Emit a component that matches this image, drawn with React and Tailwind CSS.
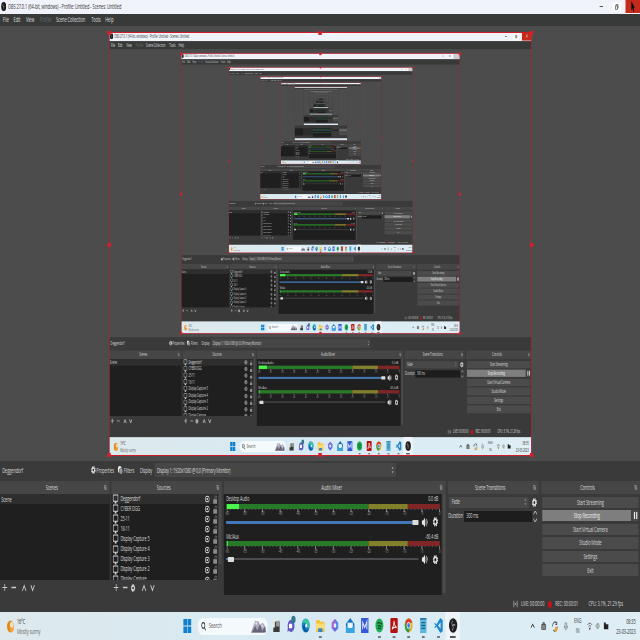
import React from "react";

const SOURCES = [
  "Deggendorf",
  "CYBER DGG",
  "25-11",
  "18-11",
  "Display Capture 5",
  "Display Capture 4",
  "Display Capture 3",
  "Display Capture 2",
  "Display Capture",
];

const DB = ["-60", "-55", "-50", "-45", "-40", "-35", "-30", "-25", "-20", "-15", "-10", "-5", "0"];

function Gear({ className = "w-[9px] h-[9px]" }) {
  return (
    <svg viewBox="0 0 16 16" className={className}>
      <circle cx="8" cy="8" r="6.6" fill="none" stroke="#e4e4e4" strokeWidth="2.6" strokeDasharray="3 2.18" />
      <circle cx="8" cy="8" r="4.4" fill="none" stroke="#e4e4e4" strokeWidth="3" />
    </svg>
  );
}

function Monitor() {
  return (
    <svg viewBox="0 0 16 16" className="h-[10px] w-[11px] shrink-0">
      <rect x="1.2" y="1.5" width="13.6" height="10" rx="1" fill="none" stroke="#dcdcdc" strokeWidth="1.7" />
      <path d="M5 15h6l-1.4-3h-3.2z" fill="#dcdcdc" />
    </svg>
  );
}

function Eye() {
  return (
    <svg viewBox="0 0 16 16" className="h-[8px] w-[9px] shrink-0">
      <ellipse cx="8" cy="8" rx="7" ry="5.6" fill="none" stroke="#cfcfcf" strokeWidth="2.2" />
      <circle cx="8" cy="8" r="2.6" fill="#d8d8d8" />
    </svg>
  );
}

function Lock() {
  return (
    <svg viewBox="0 0 16 16" className="h-[9px] w-[9px] shrink-0">
      <rect x="2" y="7.5" width="12" height="8" fill="#8c8c8c" />
      <path d="M7.5 7V4a2.8 2.8 0 0 1 5.6 0v2" fill="none" stroke="#777" strokeWidth="1.7" />
    </svg>
  );
}

function Speaker() {
  return (
    <svg viewBox="0 0 16 16" className="h-[11px] w-[13px] shrink-0">
      <path d="M0 5h3l5-4v14l-5-4H0z" fill="#e8e8e8" />
      <path d="M10 5q2 3 0 6M12.2 2.8q3.6 5.2 0 10.4" fill="none" stroke="#e8e8e8" strokeWidth="1.6" />
    </svg>
  );
}

function ListTools({ gear }) {
  return (
    <div className="flex h-[15px] items-center pl-[4px]">
      <svg viewBox="0 0 10 10" className="h-[9px] w-[9px]"><path d="M5 1v8M0 5h10" stroke="#ccc" strokeWidth="1.3" /></svg>
      <svg viewBox="0 0 10 10" className="ml-[7px] h-[9px] w-[9px]"><path d="M0 5h10" stroke="#ccc" strokeWidth="1.4" /></svg>
      {gear && <Gear className="ml-[5px] h-[8px] w-[9px]" />}
      <svg viewBox="0 0 10 10" className={gear ? "ml-[10px] h-[8px] w-[10px]" : "ml-[9px] h-[8px] w-[10px]"}>
        <path d="M1 8.5L5 2l4 6.5" fill="none" stroke="#ccc" strokeWidth="1.7" />
      </svg>
      <svg viewBox="0 0 10 10" className="ml-[5px] h-[8px] w-[10px]">
        <path d="M1 1.5L5 8l4-6.5" fill="none" stroke="#ccc" strokeWidth="1.7" />
      </svg>
    </div>
  );
}

function DockTitle({ children }) {
  return (
    <div className="flex h-[12.5px] shrink-0 items-center bg-[#464646] pr-[5px]">
      <span className="flex-1 text-center text-[7px] tracking-[-0.2px]">{children}</span>
      <svg viewBox="0 0 8 8" className="h-[5px] w-[6px]">
        <path d="M0 1h7M2 3h5v4H3z" fill="none" stroke="#bbb" strokeWidth="1.2" />
      </svg>
    </div>
  );
}

function Channel({ name, db, level, active }) {
  return (
    <div className="flex h-[37.4px] flex-col pl-[4px] pr-[6px]">
      <div className="flex h-[9.5px] items-center justify-between pt-[1.5px] text-[6.4px] tracking-[-0.2px]">
        <span>{name}</span>
        <span>{db}</span>
      </div>
      <div className="ml-[1px] flex h-[5px] w-[379px]">
        <div className="w-[252px] bg-[#287a28]">
          <div className="h-full bg-[#4cf54c]" style={{ width: level }} />
        </div>
        <div className="w-[70px] bg-[#83802b]" />
        <div className="w-[57px] bg-[#802626]" />
      </div>
      <svg viewBox="0 0 379 3" className="ml-[1px] h-[3px] w-[379px] shrink-0">
        {Array.from({ length: 61 }, (_, i) => (
          <path key={i} d={`M${0.5 + i * 6.3} 0V${i % 5 ? 1 : 3}`} stroke={i % 5 ? "#777" : "#ccc"} strokeWidth="0.8" />
        ))}
      </svg>
      <div className="-ml-[14px] flex h-[4px] w-[410px] shrink-0 items-center">
        {DB.map((d) => (
          <span key={d} className="w-[31.5px] shrink-0 text-center text-[4.6px] text-[#aaa]">{d}</span>
        ))}
      </div>
      <div className="flex h-[13px] shrink-0 items-center">
        <div className={active ? "h-[3px] w-[336px] bg-[#4478b8]" : "h-[2px] w-[3px] bg-[#4478b8]"} />
        <div className="h-[5px] w-[11px] rounded-[1px] bg-[#dcdcdc]" />
        {!active && <div className="h-[2.2px] w-[333px] bg-[#4c4c50]" />}
        <div className="ml-[5px] flex items-center gap-[7px]">
          <Speaker />
          <Gear className="h-[9.5px] w-[10px]" />
        </div>
      </div>
    </div>
  );
}

const APPS = [
  // task view
  <><rect x="1" y="1" width="9" height="11" fill="#e9e9e9" /><path d="M5 4h9v11H2V10h3z" fill="#3a3a3a" /><path d="M7 3h7v6H7z" fill="#999" /></>,
  // chat
  <><path d="M8 2a6.5 6.5 0 1 1-4 11.600L1 15l.8-4A6.500 6.500 0 0 1 8 2z" fill="#5f5bc4" /><rect x="4" y="6" width="6" height="5" rx="1" fill="#fff" /><circle cx="12.500" cy="1.500" r="4" fill="#34768c" /></>,
  // edge
  <><circle cx="8" cy="8" r="7.500" fill="#1683c9" /><path d="M1 6a7.500 7.500 0 0 1 14.500 2c0 3-5 3-5 1C10 5 4 4 1 6z" fill="#3cc6a0" /><path d="M6 8c0 4 4 6 8 4-3 5-10 4-11-2 0-2 2-4 5-3-1 0-2 0-2 1z" fill="#0d57a5" /><circle cx="9" cy="8" r="2" fill="#dff3fb" /></>,
  // explorer
  <><path d="M0 2h6l2 2h8v11H0z" fill="#f5c33b" /><path d="M0 6h16v6H0z" fill="#fbdc72" /><path d="M4 11h8v4H4z" fill="#2f86cf" /></>,
  // office
  <><path d="M8 1l6 4v6l-6 4-6-4V5z" fill="#6a67d8" /><path d="M8 1l6 4v6l-3 2V6z" fill="#4a90e8" /><path d="M2 5l6-4 2 4-4 2v5l-4-1z" fill="#a06ad0" /><circle cx="8" cy="8" r="2.500" fill="#e6eef8" /></>,
  // mail
  <><path d="M0 6l8-6 8 6v10H0z" fill="#1a73b8" /><path d="M3 5h10v6H3z" fill="#eef6fb" /><path d="M0 8l8 4 8-4v8H0z" fill="#38a7e0" /></>,
  // editor
  <><rect x="1" y="0" width="14" height="16" fill="#3558d6" /><path d="M4 12V5l4 5 4-6v8" fill="none" stroke="#dfe6ff" strokeWidth="1.800" /></>,
  // spotify
  <><circle cx="8" cy="8" r="7.500" fill="#1fae54" /><path d="M4 5.500q4-1.500 8.500 1M4.500 8.500q4-1 7 1M5 11q3-.7 5.500.7" fill="none" stroke="#123f24" strokeWidth="1.300" /></>,
  // acrobat
  <><rect x="1" y="0" width="14" height="16" rx="1.500" fill="#b3130f" /><path d="M4 12q4-4 4-9 1 6 5 7-5-1-9 2z" fill="none" stroke="#fff" strokeWidth="1.300" /></>,
  // chrome
  <><circle cx="8" cy="8" r="7.500" fill="#e2b72c" /><path d="M1.500 4.500A7.500 7.500 0 0 1 15 5H8L5 10z" fill="#d9412f" /><path d="M1.500 4.500A7.500 7.500 0 0 0 8 15.500l3-5.500H5z" fill="#2f9e4f" /><circle cx="8" cy="8" r="3.500" fill="#fff" /><circle cx="8" cy="8" r="2.600" fill="#3c7de0" /></>,
  // notepad
  <><rect x="2" y="0" width="12" height="16" fill="#5cb7dd" /><path d="M2 1h12M4 5h8M4 8h8M4 11h8" stroke="#1d6488" strokeWidth="1.400" /></>,
  // vs code
  <><path d="M11.500 0L16 2v12l-4.500 2L4 9l-2.500 2L0 10l3-2-3-2 1.500-1L4 7zM12 4.500L7.500 8 12 11.500z" fill="#1d86cd" fillRule="evenodd" /></>,
  // obs
  <><circle cx="8" cy="8" r="7.800" fill="#1e1e22" /><path d="M7 3a3 3 0 0 0 0 5M12 8a3 3 0 0 0-5 1M6 13a3 3 0 0 0 2-4" fill="none" stroke="#a5a5a5" strokeWidth="1.200" /></>,
];

function Taskbar() {
  return (
    <div className="flex h-[28px] shrink-0 items-center bg-gradient-to-r from-[#dde9ec] via-[#d7eaf4] to-[#dfeef5] text-[#333]">
      <div className="flex w-[325px] items-center pl-[12px]">
        <svg viewBox="0 0 16 16" className="h-[13px] w-[13px]">
          <circle cx="8" cy="8" r="7.500" fill="#e08a1e" />
          <circle cx="11" cy="6" r="4" fill="#f1dcc0" />
          <path d="M7 10q4-3 8 2l-3 3H8z" fill="#f4a63a" />
        </svg>
        <div className="ml-[5px] flex flex-col gap-[3px] text-[7px]">
          <span className="tracking-[-0.2px]">16°C</span>
          <span className="tracking-[-0.1px] text-[#666]">Mostly sunny</span>
        </div>
      </div>
      <svg viewBox="0 0 16 16" className="h-[14px] w-[16px]">
        <path d="M0 0h7.500v7.500H0zM8.500 0H16v7.500H8.500zM0 8.500h7.500V16H0zM8.500 8.500H16V16H8.500z" fill="#0f7fd0" />
      </svg>
      <div className="ml-[11px] flex h-[17px] w-[124px] items-center rounded-[8px] bg-[#f4f9fc] pl-[5px]">
        <svg viewBox="0 0 16 16" className="h-[9px] w-[10px]">
          <circle cx="7" cy="6" r="5" fill="none" stroke="#333" strokeWidth="2" />
          <path d="M10 10l5 5" stroke="#333" strokeWidth="2" />
        </svg>
        <span className="ml-[4px] text-[7.600px] tracking-[-0.1px] text-[#555]">Search</span>
        <svg viewBox="0 0 32 16" className="ml-auto h-[14px] w-[32px]">
          <path d="M0 16L5 8l4-6 7 1 3 4 5-3 7 6-3 6z" fill="#a9a5b8" />
          <path d="M2 15l7-7 4 5 6-7 4 8 5-5 3 6z" fill="#686477" />
          <path d="M8 5l3-2 3 2-3 2zM20 8l4-2 2 4z" fill="#dfdce8" />
        </svg>
      </div>
      <div className="ml-[2px] flex h-full">
        {APPS.map((icon, i) => (
          <div key={i} className={i === 12 ? "flex w-[26.2px] flex-col items-center bg-[#eef5f9] pt-[6px]" : "flex w-[26.2px] flex-col items-center pt-[6px]"}>
            <svg viewBox="0 0 16 16" className="h-[15px] w-[15px] overflow-visible">{icon}</svg>
            {(i === 3 || i > 6) && <div className={i === 12 ? "mt-[3px] h-[1.500px] w-[10px] bg-[#555]" : "mt-[3px] h-[1.500px] w-[5px] bg-[#777]"} />}
          </div>
        ))}
      </div>
      <div className="ml-auto flex items-center pr-[8px]">
        <svg viewBox="0 0 10 10" className="h-[8px] w-[8px]"><path d="M1 7l4-4 4 4" fill="none" stroke="#333" strokeWidth="1.500" /></svg>
        <svg viewBox="0 0 16 16" className="ml-[10px] h-[8px] w-[11px]"><path d="M1 5h14v10H1zM4 5l2-4h4l2 4" fill="#888" stroke="#333" strokeWidth="1.500" /></svg>
        <svg viewBox="0 0 16 16" className="ml-[8px] h-[11px] w-[13px]">
          <path d="M2 8a6 6 0 0 1 10-5M13 1v4H9M14 8a6 6 0 0 1-10 5" fill="none" stroke="#555" strokeWidth="1.800" />
          <circle cx="11" cy="12" r="3.500" fill="#f0a02c" />
        </svg>
        <svg viewBox="0 0 16 16" className="ml-[9px] h-[11px] w-[8px]">
          <rect x="5" y="0" width="6" height="10" rx="3" fill="none" stroke="#666" strokeWidth="1.500" />
          <path d="M2 7q0 6 6 6t6-6M8 13v3" fill="none" stroke="#666" strokeWidth="1.500" />
        </svg>
        <div className="ml-[9px] flex w-[16px] flex-col items-center gap-[3px] text-[6.500px]"><span>ENG</span><span>IN</span></div>
        <svg viewBox="0 0 16 16" className="ml-[8px] h-[9px] w-[11px]">
          <path d="M1 5q7-6 14 0M4 8q4-4 8 0" fill="none" stroke="#333" strokeWidth="1.600" />
          <path d="M5 10h6l-3 5z" fill="#444" />
        </svg>
        <svg viewBox="0 0 16 16" className="ml-[4px] h-[8px] w-[10px]">
          <path d="M1 6h3l4-4v12l-4-4H1z" fill="none" stroke="#555" strokeWidth="1.300" />
          <path d="M11 5q3 3 0 6" fill="none" stroke="#555" strokeWidth="1.300" />
        </svg>
        <svg viewBox="0 0 16 16" className="ml-[4px] h-[9px] w-[11px]"><path d="M1 1h6v3h8v9H1z" fill="#222" /></svg>
        <div className="ml-[9px] flex w-[38px] flex-col items-end gap-[3px] text-[7px] tracking-[-0.2px]"><span>08:35</span><span>23-03-2023</span></div>
      </div>
    </div>
  );
}

function Handles() {
  const dot = "absolute h-[3.500px] w-[6px] bg-[#d81e2c]";
  return (
    <div className="absolute inset-0 border-x-[1.800px] border-y-[1.300px] border-[#cc1c2a]">
      <div className={`${dot} -left-[4px] -top-[2px]`} />
      <div className={`${dot} left-[371px] -top-[2px]`} />
      <div className={`${dot} -right-[4px] -top-[2px]`} />
      <div className={`${dot} -left-[4px] top-[210px]`} />
      <div className={`${dot} -right-[4px] top-[210px]`} />
      <div className={`${dot} -left-[4px] -bottom-[2px]`} />
      <div className={`${dot} left-[371px] -bottom-[2px]`} />
      <div className={`${dot} -right-[4px] -bottom-[2px]`} />
    </div>
  );
}

// The innermost windows, where only the blocks of the layout are still visible.
function TinyScreen({ depth }) {
  return (
    <div className="flex h-[640px] w-[1138px] flex-col overflow-hidden bg-[#3a3a3a]">
      <div className="h-[13.500px] shrink-0 bg-[#f0f3fa]" />
      <div className="h-[12.500px] shrink-0 bg-[#383a3a]" />
      <div className="flex h-[435px] shrink-0 justify-center bg-[#4c4c4c] pt-[6px]">
        <div className="h-[423.500px] w-[751px] overflow-hidden">
          {depth < 11 && (
            <div className="h-[640px] w-[1138px] origin-top-left scale-x-[0.66] scale-y-[0.662]">
              <TinyScreen depth={depth + 1} />
            </div>
          )}
        </div>
      </div>
      <div className="h-[33px] shrink-0" />
      <div className="flex h-[101px] shrink-0 gap-[3px]">
        <div className="h-[86px] w-[195px] bg-[#1f1f1f]" />
        <div className="h-[86px] w-[197px] bg-[#2c2c2c]" />
        <div className="flex w-[394px] flex-col gap-[12px] bg-[#1f1f1f] pt-[10px]">
          <div className="h-[6px] bg-[#2f6a2f]" />
          <div className="h-[4px] bg-[#4478b8]" />
          <div className="h-[6px] bg-[#2f6a2f]" />
        </div>
        <div className="mt-[17px] h-[11px] w-[162px] bg-[#1f1f1f]" />
        <div className="h-[82px] flex-1 bg-[#4b4b4b] pt-[16px]"><div className="h-[12px] bg-[#7e7e7e]" /></div>
      </div>
      <div className="h-[17px] shrink-0" />
      <div className="h-[28px] shrink-0 bg-[#d9eaf3]" />
    </div>
  );
}

function Screen({ depth }) {
  return (
    <div className="flex h-[640px] w-[1138px] flex-col overflow-hidden bg-[#3a3a3a] font-['Open_Sans','Noto_Sans',sans-serif] leading-none whitespace-nowrap text-[#d6d6d6] [&_span]:leading-none">
      <div className="flex h-[13.500px] shrink-0 items-center bg-[#f0f3fa] text-[#333]">
        <svg viewBox="0 0 16 16" className="ml-[2px] h-[9px] w-[9px]">
          <circle cx="8" cy="8" r="8" fill="#151515" />
          <path d="M7 3a3 3 0 0 0 0 5M12 8a3 3 0 0 0-5 1M6 13a3 3 0 0 0 2-4" fill="none" stroke="#aaa" strokeWidth="1.200" />
        </svg>
        <span className="ml-[3px] text-[7px] tracking-[-0.09px]">OBS 27.0.1 (64-bit, windows) - Profile: Untitled - Scenes: Untitled</span>
        <div className="ml-auto flex h-full items-center">
          <div className="mr-[16px] h-[0.800px] w-[6px] bg-[#555]" />
          <div className="mr-[8px] flex h-[10px] w-[16px] items-center justify-center rounded-[2px] bg-[#fafbfd]">
            <svg viewBox="0 0 10 10" className="h-[6px] w-[7px]"><path d="M1 3h6v6H1zM3 3V1h6v6H7" fill="none" stroke="#333" strokeWidth="1.300" /></svg>
          </div>
          <div className={depth < 2 ? "flex h-[12.500px] w-[26px] items-center justify-center self-start bg-[#c42b1c]" : "flex h-full w-[26px] items-center justify-center bg-[#c9ccd2]"}>
            {depth === 0 ? (
              <svg viewBox="0 0 10 14" className="h-[11px] w-[9px]"><path d="M1 0l8 8.500H6l2 4.500-2 1-2-4.500-3 2.500z" fill="#0c0c0c" /></svg>
            ) : (
              <svg viewBox="0 0 10 10" className="h-[6px] w-[6px]"><path d="M1 1l8 8M9 1L1 9" stroke="#e9d9a0" strokeWidth="1.600" /></svg>
            )}
          </div>
        </div>
      </div>

      <div className="flex h-[12.500px] shrink-0 items-center bg-[#383a3a] pl-[5px] text-[7px] tracking-[-0.1px] text-[#dedede]">
        <span className="w-[19px]">File</span>
        <span className="w-[22px]">Edit</span>
        <span className="w-[25px]">View</span>
        <span className="w-[28.500px] text-[#6a6a6a]">Profile</span>
        <span className="w-[62.500px]">Scene Collection</span>
        <span className="w-[25px]">Tools</span>
        <span>Help</span>
      </div>

      <div className="flex h-[435px] shrink-0 justify-center bg-[#4c4c4c] pt-[6px]">
        <div className="relative h-[423.500px] w-[751px]">
          <div className="h-[423.500px] w-[751px] overflow-hidden">
            <div className="h-[640px] w-[1138px] origin-top-left scale-x-[0.66] scale-y-[0.662]">
              {depth < 5 ? <Screen depth={depth + 1} /> : <TinyScreen depth={depth + 1} />}
            </div>
          </div>
          <Handles />
        </div>
      </div>

      <div className="flex h-[20px] shrink-0 items-start pt-[2px] text-[7px] tracking-[-0.15px]">
        <div className="flex h-[14px] w-full items-center">
          <span className="w-[161px] pl-[4px]">Deggendorf</span>
          <Gear className="h-[8px] w-[10px]" />
          <span className="w-[38px] tracking-[-0.2px]">Properties</span>
          <svg viewBox="0 0 16 16" className="h-[9px] w-[10px]">
            <circle cx="6" cy="6" r="6" fill="#eee" />
            <circle cx="10" cy="9" r="5.500" fill="#999" stroke="#3a3a3a" />
          </svg>
          <span className="ml-[1px] w-[29px]">Filters</span>
          <span className="w-[26px] tracking-[-0.3px]">Display</span>
          <div className="flex h-[14px] w-[429px] items-center justify-between bg-[#464646] pl-[4px] pr-[4px]">
            <span className="tracking-[-0.4px]">Display 1: 1920x1080 @ 0,0 (Primary Monitor)</span>
            <svg viewBox="0 0 6 10" className="h-[8px] w-[4px]"><path d="M0 3l3-3 3 3zM0 7l3 3 3-3z" fill="#a5a5a5" /></svg>
          </div>
        </div>
      </div>

      <div className="flex h-[114px] shrink-0">
        <div className="mr-[3px] flex w-[195px] flex-col">
          <DockTitle>Scenes</DockTitle>
          <div className="mt-[0.500px] h-[86px] bg-[#1f1f1f]">
            <div className="flex h-[10px] items-center bg-[#2e2e2e] pl-[2px] text-[7px] tracking-[-0.1px]"><span>Scene</span></div>
          </div>
          <ListTools />
        </div>

        <div className="mr-[3px] flex w-[197px] flex-col">
          <DockTitle>Sources</DockTitle>
          <div className="mt-[0.500px] flex h-[86px]">
            <div className="w-[189px] overflow-hidden bg-[#1f1f1f]">
              {SOURCES.map((s, i) => (
                <div key={s} className={i === 0 ? "flex h-[10.100px] items-center bg-[#2e2e2e] pl-[2px]" : "flex h-[10.100px] items-center pl-[2px]"}>
                  <Monitor />
                  <span className="ml-[3px] flex-1 text-[6.800px] tracking-[-0.24px]">{s}</span>
                  <Eye />
                  <span className="w-[5px]" />
                  <Lock />
                </div>
              ))}
            </div>
            <div className="ml-[2px] h-[70px] w-[5px] bg-[#4a4a4a]" />
          </div>
          <ListTools gear />
        </div>

        <div className="mr-[4px] flex w-[394px] flex-col">
          <DockTitle>Audio Mixer</DockTitle>
          <div className="mt-[0.500px] flex h-[101px]">
            <div className="w-[387px] overflow-hidden bg-[#1f1f1f]">
              <Channel name="Desktop Audio" db="0.0 dB" level={22} active />
              <Channel name="Mic/Aux" db="-60.4 dB" level={1.5} />
            </div>
            <div className="ml-[2px] h-[99px] w-[5px] bg-[#4c4c4c]" />
          </div>
        </div>

        <div className="mr-[4px] flex w-[162px] flex-col text-[6.800px] tracking-[-0.15px]">
          <DockTitle>Scene Transitions</DockTitle>
          <div className="mt-[3px] flex items-center pl-[2px]">
            <div className="flex h-[11px] w-[142px] items-center justify-between bg-[#484848] pl-[5px] pr-[4px]">
              <span>Fade</span>
              <svg viewBox="0 0 6 10" className="h-[8px] w-[4px]"><path d="M0 3l3-3 3 3zM0 7l3 3 3-3z" fill="#8a8a8a" /></svg>
            </div>
            <Gear className="ml-[5px] h-[9px] w-[10px]" />
          </div>
          <div className="mt-[3px] flex items-center pl-[1px]">
            <span className="w-[28px] tracking-[-0.25px]">Duration</span>
            <div className="flex h-[11px] w-[121px] items-center bg-[#1d1d1d] pl-[4px]"><span className="tracking-[-0.3px]">300 ms</span></div>
            <svg viewBox="0 0 6 10" className="ml-[2px] h-[11px] w-[7px]"><path d="M0 3l3-3 3 3M0 7l3 3 3-3" fill="none" stroke="#bbb" /></svg>
          </div>
        </div>

        <div className="flex w-[176px] flex-col text-[7px] tracking-[-0.22px]">
          <DockTitle>Controls</DockTitle>
          <div className="mt-[3px] flex flex-col gap-[2.200px] pl-[2px] pr-[3px]">
            {["Start Streaming", "Stop Recording", "Start Virtual Camera", "Studio Mode", "Settings", "Exit"].map((b, i) => (
              <div key={b} className="flex h-[11.400px] items-center">
                <div className={i === 1 ? "flex h-full flex-1 items-center justify-center bg-[#7e7e7e] text-[#eee]" : "flex h-full flex-1 items-center justify-center bg-[#4b4b4b]"}>
                  <span>{b}</span>
                </div>
                {i === 1 && (
                  <div className="ml-[2px] flex h-full w-[11px] items-center justify-center gap-[2px] bg-[#4b4b4b]">
                    <div className="h-[7px] w-[2px] bg-[#eee]" />
                    <div className="h-[7px] w-[2px] bg-[#eee]" />
                  </div>
                )}
              </div>
            ))}
          </div>
        </div>
      </div>

      <div className="flex h-[17px] shrink-0 items-center pb-[1px] pl-[911px] pt-[2px] text-[6.800px] tracking-[-0.15px]">
        <svg viewBox="0 0 16 16" className="h-[8px] w-[11px]">
          <circle cx="8" cy="8" r="2" fill="#bbb" />
          <path d="M4 3q-3 5 0 10M12 3q3 5 0 10M1.500 1q-3 7 0 14M14.500 1q3 7 0 14" fill="none" stroke="#aaa" strokeWidth="1.300" />
        </svg>
        <span className="ml-[4px] w-[48px]">LIVE: 00:00:00</span>
        <div className="mr-[6px] h-[7px] w-[7px] rounded-full bg-[#c8101c]" />
        <span className="w-[59px]">REC: 00:00:01</span>
        <span>CPU: 3.1%, 21.29 fps</span>
      </div>

      <Taskbar />
    </div>
  );
}

export default function App() {
  return (
    <div className="h-[640px] w-[640px] overflow-hidden bg-[#3a3a3a]">
      <div className="h-[640px] w-[1138px] origin-top-left scale-x-[0.5625]">
        <Screen depth={0} />
      </div>
    </div>
  );
}
